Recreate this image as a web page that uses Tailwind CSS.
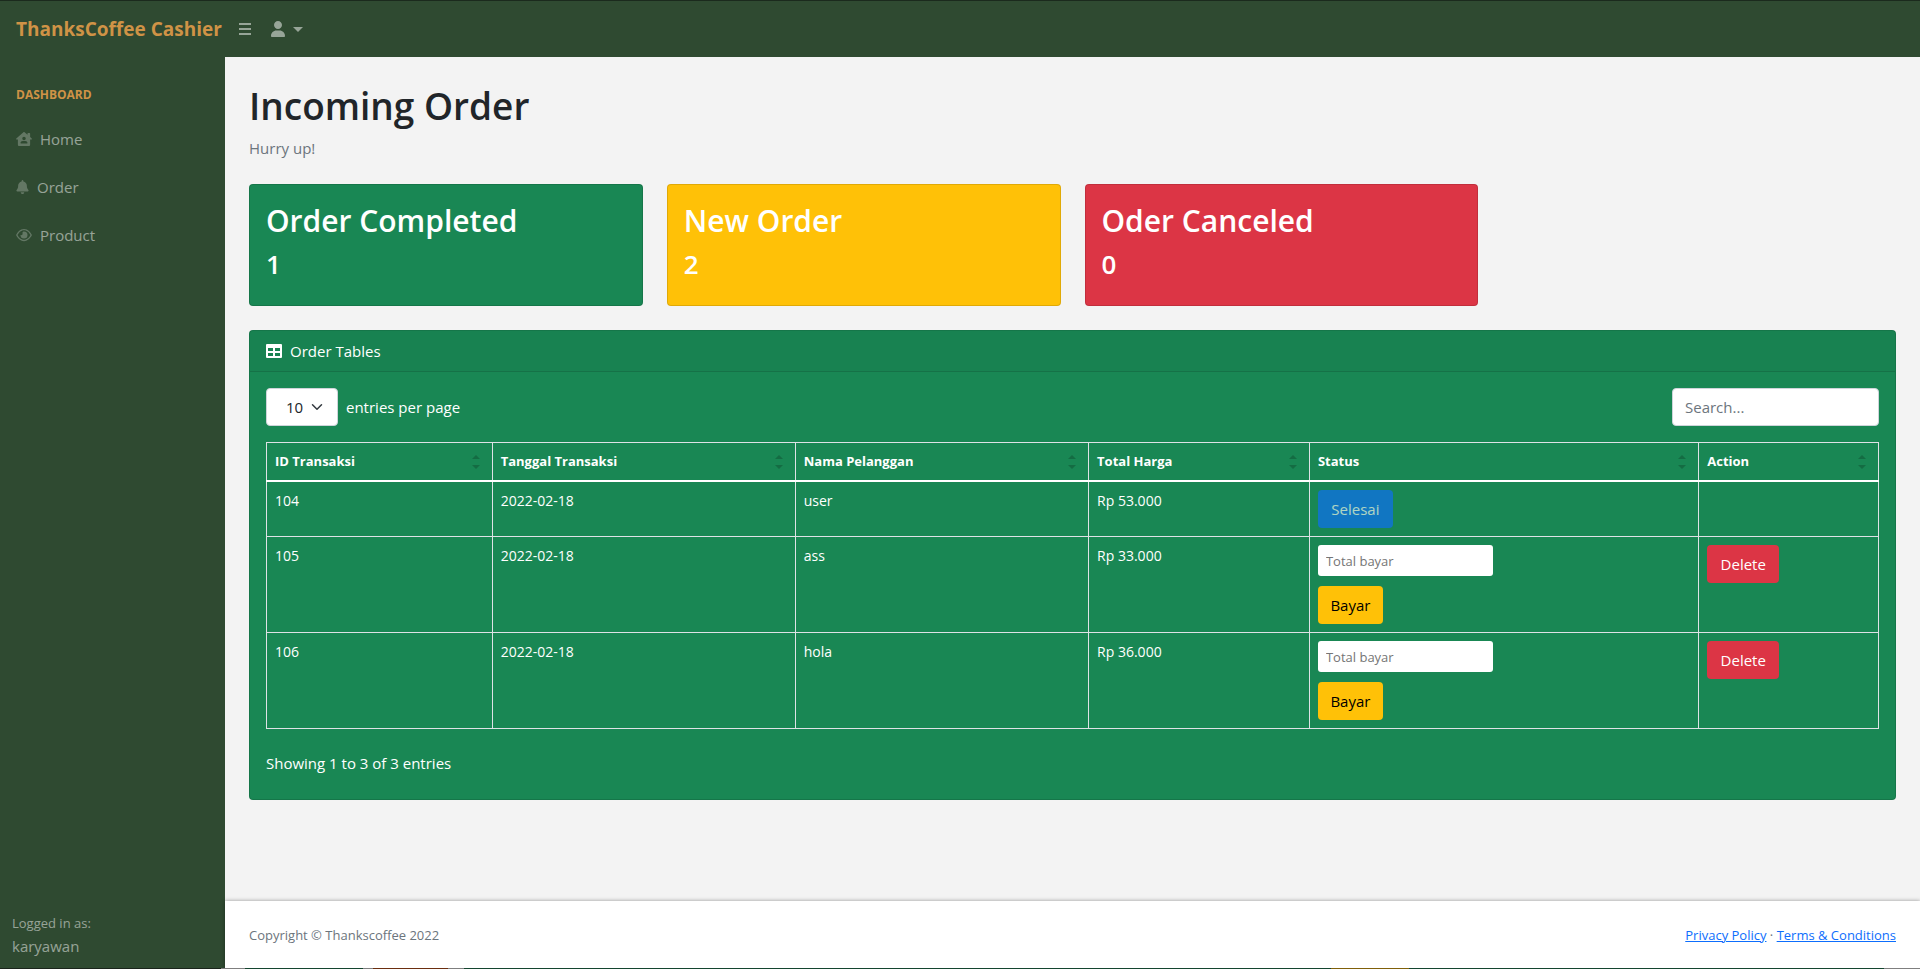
<!DOCTYPE html>
<html lang="id">
<head>
<meta charset="utf-8">
<meta name="viewport" content="width=device-width, initial-scale=1">
<title>ThanksCoffee Cashier</title>
<script src="https://cdn.jsdelivr.net/npm/@tailwindcss/browser@4"></script>
</head>
<body class="flex min-h-screen flex-col bg-[#f3f3f3] font-['Open_Sans','Noto_Sans',sans-serif] text-[15px] leading-6 text-[#212529]">
  <header class="flex h-[57px] items-center border-t border-[#1b2a1d] bg-[#2f4a31] text-white/50">
    <a href="#" class="w-[225px] pl-4 text-[19px] font-bold text-[#cf9346]">ThanksCoffee Cashier</a>
    <button type="button" aria-label="Toggle sidebar" class="ml-3.5">
      <svg class="h-4 w-3" viewBox="0 0 12 16" fill="currentColor"><path d="M0 2h12v2H0zM0 7h12v2H0zM0 12h12v2H0z"/></svg>
    </button>
    <button type="button" aria-label="User menu" class="ml-5 flex items-center gap-2">
      <svg class="h-4 w-3.5" viewBox="0 0 448 512" fill="currentColor"><path d="M224 256c70.700 0 128-57.310 128-128s-57.300-128-128-128C153.300 0 96 57.310 96 128S153.300 256 224 256zM274.700 304H173.300C77.610 304 0 381.600 0 477.300c0 19.140 15.520 34.670 34.660 34.670h378.700C432.500 512 448 496.500 448 477.300C448 381.600 370.400 304 274.700 304z"/></svg>
      <svg class="h-[5px] w-2.5" viewBox="0 0 10 5" fill="currentColor"><path d="M0 0h10L5 5z"/></svg>
    </button>
  </header>
  <div class="flex grow">
    <aside class="flex w-[225px] shrink-0 flex-col justify-between bg-[#2f4a31] text-white/50">
      <nav class="flex flex-col px-4 pt-[26px]">
        <h2 class="mb-2 text-xs/6 font-bold uppercase text-[#cf9346]">Dashboard</h2>
        <a href="#" class="flex h-12 items-center gap-2">
          <svg class="h-3.5 w-4 text-white/25" viewBox="0 0 576 512" fill="currentColor"><path fill-rule="evenodd" d="M570 236 512 184V56c0-13-11-24-24-24h-48c-13 0-24 11-24 24v42L309 8c-12-11-30-11-42 0L6 236c-14 13-5 38 14 38h44v190c0 26 22 48 48 48h352c26 0 48-22 48-48V274h44c19 0 28-25 14-38zM288 176a64 64 0 1 1 0 128 64 64 0 0 1 0-128zm112 240H176c-9 0-16-7-16-16 0-44 36-72 80-72h96c44 0 80 28 80 72 0 9-7 16-16 16z"/></svg>
          Home</a>
        <a href="#" class="flex h-12 items-center gap-2">
          <svg class="h-3.5 w-[13px] text-white/25" viewBox="0 0 448 512" fill="currentColor"><path d="M256 32v19.200c73 14.800 128 79.400 128 156.800v18.800c0 47 17.300 92.400 48.500 127.600l7.400 8.300c8.400 9.500 10.400 22.900 5.300 34.400S428.600 416 416 416H32c-12.600 0-24-7.400-29.200-18.900s-3.100-25 5.300-34.400l7.400-8.300C46.700 319.200 64 273.800 64 226.800V208c0-77.400 55-142 128-156.800V32c0-17.700 14.300-32 32-32s32 14.300 32 32zm32 416c0 17-6.700 33.300-18.700 45.300S241 512 224 512s-33.300-6.700-45.300-18.700S160 465 160 448h128z"/></svg>
          Order</a>
        <a href="#" class="flex h-12 items-center gap-2">
          <svg class="h-3.5 w-4 text-white/25" viewBox="0 0 576 512" fill="currentColor"><path fill-rule="evenodd" d="M288 32C140 32 40 160 2 244c-3 8-3 16 0 24 38 84 138 212 286 212s248-128 286-212c3-8 3-16 0-24C536 160 436 32 288 32zm0 48c114 0 196 96 238 176-42 80-124 176-238 176S92 336 50 256C92 176 174 80 288 80z"/><path d="M288 128a128 128 0 1 1-128 128c22 10 48 8 64-8s18-42 8-64c-2-30 20-56 56-56z"/></svg>
          Product</a>
      </nav>
      <div class="px-3 pb-2.5">
        <div class="text-[13px] leading-[21px]">Logged in as:</div>
        karyawan
      </div>
    </aside>
    <div class="flex min-w-0 grow flex-col justify-between">
      <main class="px-6 pt-[25px]">
        <h1 class="mb-1.5 text-[37px] font-semibold leading-[48px]">Incoming Order</h1>
        <p class="mb-6 text-[#6c757d]">Hurry up!</p>
        <section class="mb-6 grid grid-cols-4 gap-6 text-white">
          <div class="h-[122px] rounded border border-black/12 bg-[#198754] px-4 py-[17px]">
            <h2 class="mb-2 text-[30px] font-semibold leading-[38px]">Order Completed</h2>
            <p class="text-[26px] font-semibold leading-8">1</p>
          </div>
          <div class="h-[122px] rounded border border-black/12 bg-[#ffc107] px-4 py-[17px]">
            <h2 class="mb-2 text-[30px] font-semibold leading-[38px]">New Order</h2>
            <p class="text-[26px] font-semibold leading-8">2</p>
          </div>
          <div class="h-[122px] rounded border border-black/12 bg-[#dc3545] px-4 py-[17px]">
            <h2 class="mb-2 text-[30px] font-semibold leading-[38px]">Oder Canceled</h2>
            <p class="text-[26px] font-semibold leading-8">0</p>
          </div>
        </section>
        <section class="rounded border border-black/12 bg-[#198754] text-white">
          <div class="flex items-center gap-2 border-b border-black/12 bg-black/3 px-4 py-2">
            <svg class="h-4 w-4" viewBox="0 0 16 16" fill="currentColor"><path fill-rule="evenodd" d="M1 1h14a1 1 0 0 1 1 1v12a1 1 0 0 1-1 1H1a1 1 0 0 1-1-1V2a1 1 0 0 1 1-1zM2 5v3h5V5zM9 5v3h5V5zM2 10v3h5v-3zM9 10v3h5v-3z"/></svg>
            Order Tables
          </div>
          <div class="p-4">
            <div class="mb-4 flex items-center justify-between">
              <label class="flex items-center gap-2">
                <span class="grid items-center">
                  <select class="col-start-1 row-start-1 h-[38px] w-[72px] appearance-none rounded border border-[#ced4da] bg-white pl-[19px] text-[#212529]"><option>10</option></select>
                  <svg class="pointer-events-none col-start-1 row-start-1 mr-[15px] h-3 w-3 justify-self-end text-[#343a40]" viewBox="0 0 16 16" fill="none" stroke="currentColor" stroke-width="2" stroke-linecap="round" stroke-linejoin="round"><path d="m2 5 6 6 6-6"/></svg>
                </span>
                entries per page
              </label>
              <input type="search" aria-label="Search" placeholder="Search..." class="h-[38px] w-[207px] rounded border border-[#ced4da] bg-white px-3 text-[#212529] placeholder:text-[#6c757d]">
            </div>
            <table class="w-full table-fixed border-collapse border border-[#dee2e6] text-left align-top text-sm/[21px]">
              <colgroup><col class="w-[14%]"><col class="w-[18.800%]"><col class="w-[18.200%]"><col class="w-[13.700%]"><col class="w-[24.150%]"><col class="w-[11.150%]"></colgroup>
              <thead class="text-[13px]">
                <tr class="border-b-2 border-white">
                  <th class="border-x border-[#dee2e6] p-2"><div class="flex items-center justify-between pr-1">ID Transaksi<svg class="h-3.5 w-2 text-black/20" viewBox="0 0 8 14" fill="currentColor"><path d="M0 4 4 0l4 4zM0 10h8l-4 4z"/></svg></div></th>
                  <th class="border-x border-[#dee2e6] p-2"><div class="flex items-center justify-between pr-1">Tanggal Transaksi<svg class="h-3.5 w-2 text-black/20" viewBox="0 0 8 14" fill="currentColor"><path d="M0 4 4 0l4 4zM0 10h8l-4 4z"/></svg></div></th>
                  <th class="border-x border-[#dee2e6] p-2"><div class="flex items-center justify-between pr-1">Nama Pelanggan<svg class="h-3.5 w-2 text-black/20" viewBox="0 0 8 14" fill="currentColor"><path d="M0 4 4 0l4 4zM0 10h8l-4 4z"/></svg></div></th>
                  <th class="border-x border-[#dee2e6] p-2"><div class="flex items-center justify-between pr-1">Total Harga<svg class="h-3.5 w-2 text-black/20" viewBox="0 0 8 14" fill="currentColor"><path d="M0 4 4 0l4 4zM0 10h8l-4 4z"/></svg></div></th>
                  <th class="border-x border-[#dee2e6] p-2"><div class="flex items-center justify-between pr-1">Status<svg class="h-3.5 w-2 text-black/20" viewBox="0 0 8 14" fill="currentColor"><path d="M0 4 4 0l4 4zM0 10h8l-4 4z"/></svg></div></th>
                  <th class="border-x border-[#dee2e6] p-2"><div class="flex items-center justify-between pr-1">Action<svg class="h-3.5 w-2 text-black/20" viewBox="0 0 8 14" fill="currentColor"><path d="M0 4 4 0l4 4zM0 10h8l-4 4z"/></svg></div></th>
                </tr>
              </thead>
              <tbody class="align-top">
                <tr class="border-b border-[#dee2e6]">
                  <td class="border-x border-[#dee2e6] p-2">104</td>
                  <td class="border-x border-[#dee2e6] p-2">2022-02-18</td>
                  <td class="border-x border-[#dee2e6] p-2">user</td>
                  <td class="border-x border-[#dee2e6] p-2">Rp 53.000</td>
                  <td class="border-x border-[#dee2e6] p-2"><button type="button" disabled class="block h-[38px] w-[75px] rounded bg-[#0d6efd] text-[15px] opacity-65">Selesai</button></td>
                  <td class="border-x border-[#dee2e6] p-2"></td>
                </tr>
                <tr class="border-b border-[#dee2e6]">
                  <td class="border-x border-[#dee2e6] p-2">105</td>
                  <td class="border-x border-[#dee2e6] p-2">2022-02-18</td>
                  <td class="border-x border-[#dee2e6] p-2">ass</td>
                  <td class="border-x border-[#dee2e6] p-2">Rp 33.000</td>
                  <td class="border-x border-[#dee2e6] p-2"><input type="text" aria-label="Total bayar 105" placeholder="Total bayar" class="mb-2.5 block h-[31px] w-[175px] rounded-[3px] bg-white px-2 text-[13px] text-[#212529] placeholder:text-[#757575]"><button type="button" class="block h-[38px] w-[65px] rounded bg-[#ffc107] text-[15px] text-black">Bayar</button></td>
                  <td class="border-x border-[#dee2e6] p-2"><button type="button" class="block h-[38px] w-[72px] rounded bg-[#dc3545] text-[15px]">Delete</button></td>
                </tr>
                <tr>
                  <td class="border-x border-[#dee2e6] p-2">106</td>
                  <td class="border-x border-[#dee2e6] p-2">2022-02-18</td>
                  <td class="border-x border-[#dee2e6] p-2">hola</td>
                  <td class="border-x border-[#dee2e6] p-2">Rp 36.000</td>
                  <td class="border-x border-[#dee2e6] p-2"><input type="text" aria-label="Total bayar 106" placeholder="Total bayar" class="mb-2.5 block h-[31px] w-[175px] rounded-[3px] bg-white px-2 text-[13px] text-[#212529] placeholder:text-[#757575]"><button type="button" class="block h-[38px] w-[65px] rounded bg-[#ffc107] text-[15px] text-black">Bayar</button></td>
                  <td class="border-x border-[#dee2e6] p-2"><button type="button" class="block h-[38px] w-[72px] rounded bg-[#dc3545] text-[15px]">Delete</button></td>
                </tr>
              </tbody>
            </table>
            <p class="mb-2 mt-[22px]">Showing 1 to 3 of 3 entries</p>
          </div>
        </section>
      </main>
      <footer class="flex h-[67px] items-center justify-between bg-white px-6 text-[13px] text-[#6c757d] shadow-[0_0_4px_rgba(0,0,0,0.4)]">
        <div>Copyright © Thankscoffee 2022</div>
        <div><a href="#" class="text-[#0d6efd] underline">Privacy Policy</a> · <a href="#" class="text-[#0d6efd] underline">Terms &amp; Conditions</a></div>
      </footer>
    </div>
  </div>
  <div class="flex h-px bg-[#14452f]">
    <div class="w-[221px] bg-[#1a241b]"></div>
    <div class="w-6 bg-[#7f7f7f]"></div>
    <div class="ml-[118px] w-2.5 bg-[#7f7f7f]"></div>
    <div class="w-[75px] bg-[#6b2e10]"></div>
    <div class="w-4 bg-[#7f7f7f]"></div>
    <div class="ml-auto w-[78px] bg-[#80600a]"></div>
    <div class="ml-[475px] w-9 bg-[#7f7f7f]"></div>
  </div>
</body>
</html>
